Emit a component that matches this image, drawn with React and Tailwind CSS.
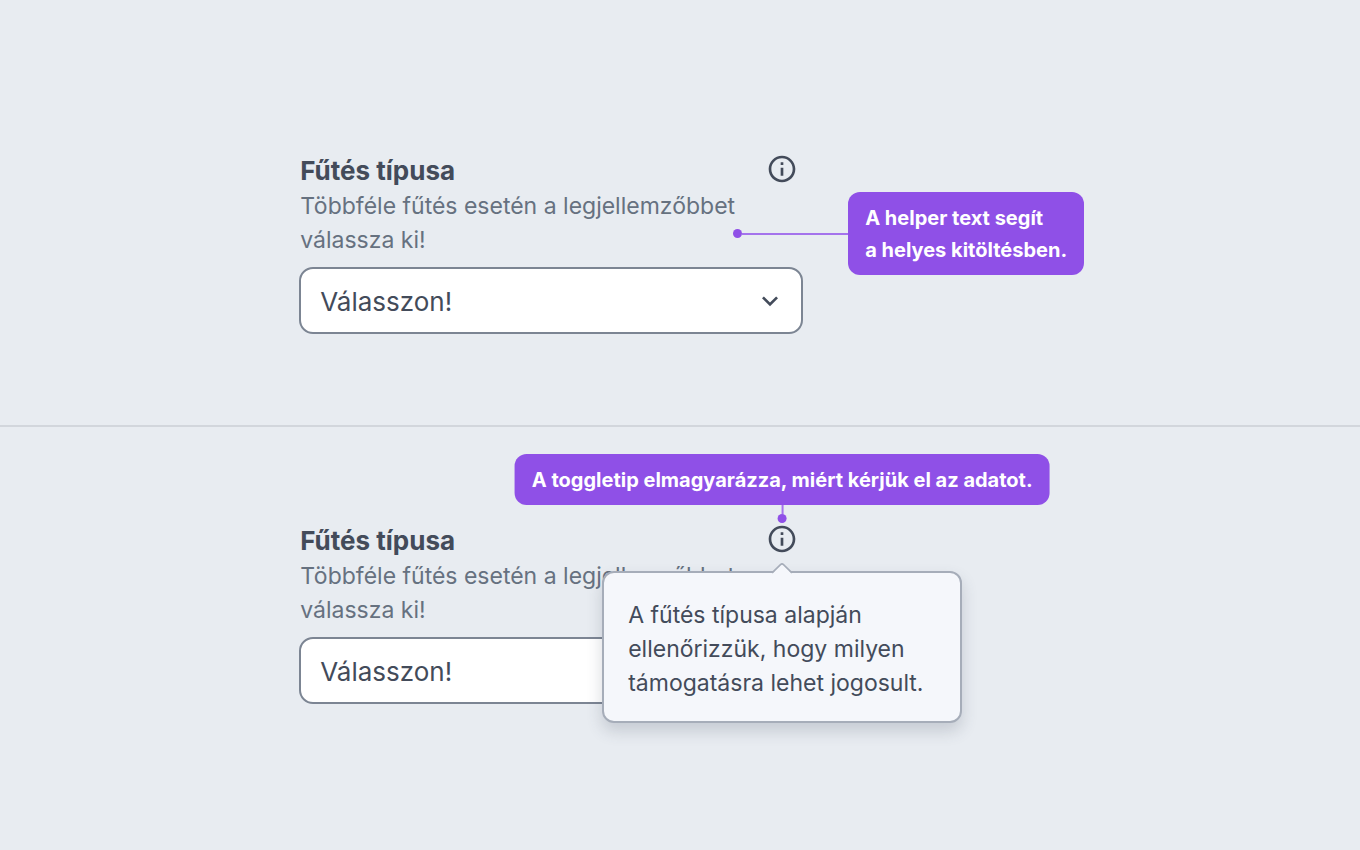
import React, { useState } from 'react';
import { MdExpandMore, MdInfoOutline } from 'react-icons/md';

const Callout = ({ children }) => (
  <div className="whitespace-nowrap rounded-xl bg-[#8f50e7] px-[17px] pb-[9px] pt-[10px] text-[20px] leading-8 font-bold text-white">
    {children}
  </div>
);

const Toggletip = ({ id, children }) => (
  <div
    id={id}
    role="tooltip"
    className="absolute left-1/2 top-full z-10 mt-4 w-[360px] -translate-x-1/2 rounded-xl border-2 border-[#a6adb9] bg-[#f5f7fb] px-6 pb-[21px] pt-[25px] text-[23px] leading-[34px] text-[#434b5a] shadow-[0_8px_16px_rgba(60,70,90,0.2)]"
  >
    <svg
      className="absolute -top-[11px] left-1/2 -translate-x-1/2"
      width="22"
      height="12"
      viewBox="0 0 22 12"
      aria-hidden="true"
    >
      <path d="M1 12 L9.5 3 Q11 1.4 12.5 3 L21 12 Z" fill="#f5f7fb" />
      <path d="M1 10.8 L9.5 2.6 Q11 1.2 12.5 2.6 L21 10.8" fill="none" stroke="#a6adb9" strokeWidth="1.6" />
    </svg>
    {children}
  </div>
);

const HeatingField = ({ id, helperNote, infoNote, defaultOpen = false }) => {
  const [open, setOpen] = useState(defaultOpen);

  return (
    <div className="w-[504px]">
      <div className="flex items-start justify-between pl-px pr-[5px]">
        <label htmlFor={id} className="text-[26px] leading-9 font-bold text-[#434b5a]">
          Fűtés típusa
        </label>
        <div className="relative">
          {infoNote && (
            <div className="absolute bottom-full left-1/2 flex -translate-x-1/2 flex-col items-center">
              <Callout>{infoNote}</Callout>
              <span className="h-[9px] w-0.5 bg-[#a473ec]" />
              <span className="size-[9px] rounded-full bg-[#8f50e7]" />
            </div>
          )}
          <button
            type="button"
            aria-label="Miért kérjük?"
            aria-expanded={open}
            onClick={() => setOpen(!open)}
            className="block text-[#434b5a]"
          >
            <MdInfoOutline size={32} />
          </button>
          {open && (
            <Toggletip id={`${id}-tip`}>
              A fűtés típusa alapján ellenőrizzük, hogy milyen támogatásra lehet jogosult.
            </Toggletip>
          )}
        </div>
      </div>

      {/* Helper text */}
      <div className="relative">
        <p id={`${id}-helper`} className="pl-px text-[23px] leading-[34px] text-[#667180]">
          Többféle fűtés esetén a legjellemzőbbet válassza ki!
        </p>
        {helperNote && (
          <div className="absolute left-[434px] top-[3px] flex items-center">
            <span className="size-[9px] rounded-full bg-[#8f50e7]" />
            <span className="h-0.5 w-[106px] bg-[#a473ec]" />
            <Callout>{helperNote}</Callout>
          </div>
        )}
      </div>

      {/* Select */}
      <div className="mt-[10px] grid items-center">
        <select
          id={id}
          aria-describedby={`${id}-helper`}
          className="col-start-1 row-start-1 h-[67px] w-full appearance-none rounded-[14px] border-2 border-[#7c8593] bg-white px-[19px] pt-0.5 text-[26px] text-[#434b5a]"
        >
          <option>Válasszon!</option>
        </select>
        <MdExpandMore
          size={32}
          className="pointer-events-none col-start-1 row-start-1 mr-[17px] justify-self-end text-[#434b5a]"
        />
      </div>
    </div>
  );
};

const App = () => {
  return (
    <main className="min-h-screen bg-[#e8ecf1] font-['Inter',sans-serif]">
      <section className="border-b-2 border-[#d2d6dc] pb-[91px] pl-[22%] pt-[153px]">
        <HeatingField
          id="heating-helper"
          helperNote={
            <>
              A helper text segít
              <br />a helyes kitöltésben.
            </>
          }
        />
      </section>
      <section className="pb-24 pl-[22%] pt-24">
        <HeatingField
          id="heating-toggletip"
          infoNote="A toggletip elmagyarázza, miért kérjük el az adatot."
          defaultOpen
        />
      </section>
    </main>
  );
};

export default App;
